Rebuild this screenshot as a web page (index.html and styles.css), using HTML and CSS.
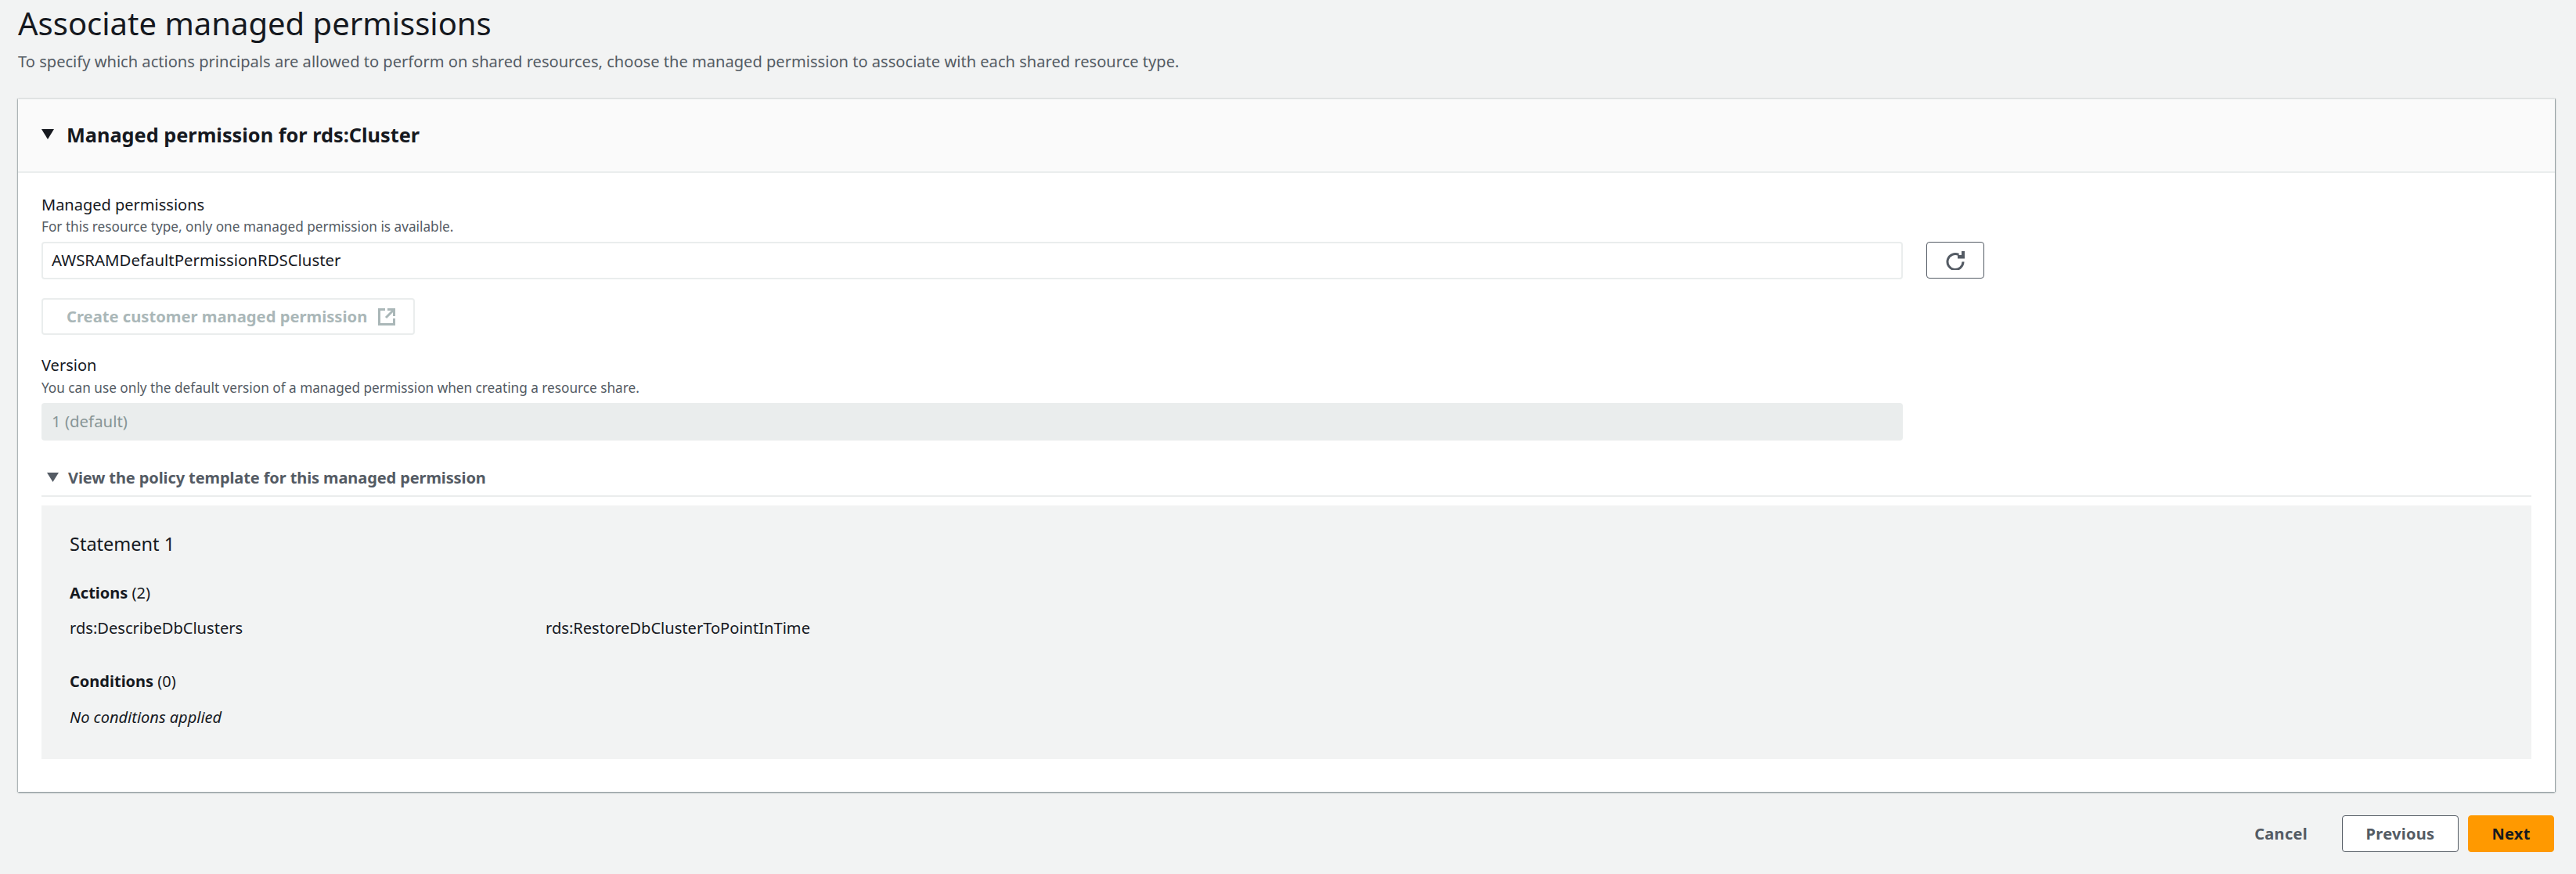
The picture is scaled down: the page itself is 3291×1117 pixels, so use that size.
FILE: index.html
```html
<!DOCTYPE html>
<html lang="en">
<head>
<meta charset="utf-8">
<title>Associate managed permissions</title>
<link rel="stylesheet" href="styles.css">
</head>
<body>
<main class="page">
  <header class="page-head">
    <h1 class="title">Associate managed permissions</h1>
    <p class="subtitle">To specify which actions principals are allowed to perform on shared resources, choose the managed permission to associate with each shared resource type.</p>
  </header>
  <section class="card">
    <div class="card-head">
      <svg class="caret-big" viewBox="0 0 16 13"><path d="M0 0h16L8 13z"/></svg>
      <h2 class="card-title">Managed permission for rds:Cluster</h2>
    </div>
    <div class="card-body">
      <div class="label">Managed permissions</div>
      <div class="desc">For this resource type, only one managed permission is available.</div>
      <div class="select-row">
        <div class="select">AWSRAMDefaultPermissionRDSCluster</div>
        <button class="icon-btn" type="button" aria-label="Refresh">
          <svg class="refresh" viewBox="0 0 24 24"><path class="refresh-arc" d="M22 13.5A10 10 0 1 1 16.5 4.6"/><path class="refresh-tip" d="M15 9.5H24V0H20V5H15Z"/></svg>
        </button>
      </div>
      <button class="btn-disabled" type="button"><span class="btn-disabled-text">Create customer managed permission</span>
        <svg class="ext" viewBox="0 0 22 22"><path d="M9 1.5H1.5v19h19V13M12 1.5h8.5V10M20.5 1.5L10 12"/></svg>
      </button>
      <div class="label label-version">Version</div>
      <div class="desc desc-version">You can use only the default version of a managed permission when creating a resource share.</div>
      <div class="input-disabled">1 (default)</div>
      <div class="expander">
        <svg class="caret-small" viewBox="0 0 15 12"><path d="M0 0h15L7.5 12z"/></svg>
        <span>View the policy template for this managed permission</span>
      </div>
      <div class="statement">
        <h3 class="st-title">Statement 1</h3>
        <div class="st-head"><b>Actions</b> (2)</div>
        <div class="actions">
          <div>rds:DescribeDbClusters</div>
          <div>rds:RestoreDbClusterToPointInTime</div>
        </div>
        <div class="st-head st-conditions"><b>Conditions</b> (0)</div>
        <div class="none">No conditions applied</div>
      </div>
    </div>
  </section>
  <footer class="footer">
    <button class="btn-link" type="button">Cancel</button>
    <button class="btn-normal" type="button">Previous</button>
    <button class="btn-primary" type="button">Next</button>
  </footer>
</main>
</body>
</html>
```
FILE: styles.css
```css
* { box-sizing: border-box; }
html, body { margin: 0; padding: 0; }
body {
  background: #f2f3f3;
  color: #16191f;
  font-family: "Noto Sans", "Open Sans", sans-serif;
  font-size: 20px;
  height: 1117px;
  overflow: hidden;
}
.page { padding: 0 27px 0 23px; }
.page-head { height: 126px; }
.title {
  margin: 0;
  padding-top: 3px;
  font-size: 40px;
  line-height: 54px;
  font-weight: 400;
}
.subtitle {
  margin: 0;
  padding-top: 8px;
  font-size: 20.1px;
  line-height: 28px;
  color: #545b64;
}
.card {
  height: 886px;
  background: #fff;
  border-top: 1px solid #eaeded;
  box-shadow: 0 1px 2px rgba(0, 28, 36, .5), 1px 0 1px rgba(0, 28, 36, .25), -1px 0 1px rgba(0, 28, 36, .15);
}
.card-head {
  height: 94px;
  display: flex;
  align-items: center;
  padding: 0 0 3px 30px;
  gap: 16px;
  background: #fafafa;
  border-bottom: 2px solid #eaeded;
}
.caret-big { width: 16px; height: 13px; fill: #16191f; }
.card-title { margin: 0; font-size: 25.3px; line-height: 34px; font-weight: 700; }
.card-body { padding: 28px 30px 0; }
.label { font-size: 20px; line-height: 26px; }
.desc { margin-top: 4px; font-size: 17.2px; line-height: 22px; color: #545b64; }
.select-row { display: flex; gap: 30px; margin-top: 8px; }
.select {
  width: 2378px;
  height: 48px;
  padding-left: 11px;
  font-size: 20.4px;
  line-height: 43px;
  border: 2px solid #eaeded;
  border-radius: 4px;
}
.icon-btn {
  width: 74px;
  height: 47px;
  background: #fff;
  border: 1px solid #545b64;
  border-radius: 4px;
  display: flex;
  align-items: center;
  justify-content: center;
  padding: 0;
}
.refresh { width: 24px; height: 24px; }
.refresh-arc { fill: none; stroke: #545b64; stroke-width: 3; }
.refresh-tip { fill: #545b64; }
.btn-disabled {
  display: flex;
  align-items: center;
  gap: 14px;
  width: 477px;
  height: 47px;
  margin-top: 24px;
  padding: 0 0 0 30px;
  background: #fff;
  border: 2px solid #eaeded;
  border-radius: 4px;
  font: 700 20.2px "Noto Sans", sans-serif;
  color: #aab7b8;
}
.btn-disabled-text { padding-bottom: 2px; }
.ext { width: 22px; height: 22px; fill: none; stroke: #aab7b8; stroke-width: 3; }
.label-version { margin-top: 26px; }
.desc-version { margin-top: 5px; }
.input-disabled {
  width: 2378px;
  height: 48px;
  margin-top: 8px;
  padding-left: 13px;
  font-size: 20.4px;
  line-height: 46px;
  background: #eaeded;
  border-radius: 4px;
  color: #879596;
}
.expander {
  height: 72px;
  display: flex;
  align-items: center;
  gap: 12px;
  padding: 24px 0 0 7px;
  border-bottom: 2px solid #eaeded;
  font-weight: 700;
  color: #545b64;
}
.caret-small { width: 15px; height: 12px; fill: #545b64; }
.expander span { letter-spacing: -.1px; }
.statement {
  height: 324px;
  margin-top: 11px;
  padding: 34px 36px 0;
  background: #f2f3f3;
}
.st-title { margin: 0; font-size: 23.5px; line-height: 30px; font-weight: 400; }
.st-head { margin-top: 35px; line-height: 26px; }
.actions {
  display: grid;
  grid-template-columns: 608px 1fr;
  margin-top: 19px;
  font-size: 20.1px;
  line-height: 26px;
}
.st-conditions { margin-top: 42px; }
.none { margin-top: 20px; font-style: italic; line-height: 26px; }
.footer {
  display: flex;
  justify-content: flex-end;
  align-items: center;
  margin-top: 30px;
  padding-right: 1px;
}
.btn-link, .btn-normal, .btn-primary {
  height: 47px;
  font: 700 20px "Noto Sans", sans-serif;
  letter-spacing: .3px;
  border-radius: 4px;
  padding: 0;
}
.btn-link { margin-right: 44px; background: none; border: 0; color: #545b64; }
.btn-normal { width: 149px; margin-right: 12px; background: #fff; border: 1px solid #545b64; color: #545b64; }
.btn-primary { width: 110px; background: #ff9900; border: 1px solid #ff9900; color: #16191f; }
```
